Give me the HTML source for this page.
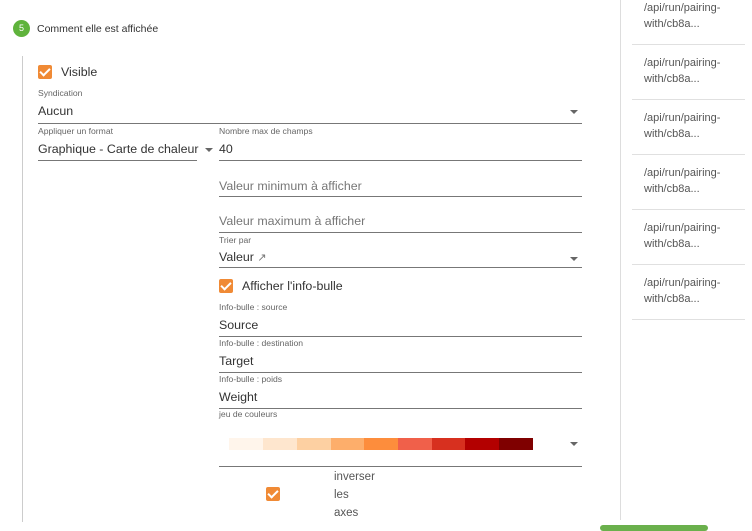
<!DOCTYPE html>
<html><head><meta charset="utf-8"><style>
*{margin:0;padding:0;box-sizing:border-box}
body{width:752px;height:528px;overflow:hidden;background:#fff;font-family:"Liberation Sans",sans-serif;color:#333;position:relative}
.a{position:absolute;white-space:nowrap}
.v{font-size:12.4px;line-height:16px;color:#333}
.l{font-size:8.6px;line-height:10px;color:#666}
.ph{color:#777}
.u{position:absolute;height:1px;background:#777}
.cb{position:absolute;width:14px;height:14px;background:#f08a35;border-radius:2px}
.cb:after{content:"";position:absolute;left:4px;top:1px;width:4px;height:8px;border:solid #fff;border-width:0 2px 2px 0;transform:rotate(45deg)}
.ar{position:absolute;width:0;height:0;border-left:4px solid transparent;border-right:4px solid transparent;border-top:4px solid #666}
.r{font-size:11px;line-height:16px;color:#555}
.s{position:absolute;left:632px;width:113px;height:1px;background:#e0e0e0}
</style></head><body>
<div class="a" style="left:13px;top:20px;width:17px;height:17px;border-radius:50%;background:#5fb33c;color:#fff;font-size:9px;line-height:17px;text-align:center">5</div>
<div class="a" style="left:37px;top:22px;font-size:10.5px;line-height:14px;color:#333">Comment elle est affichée</div>
<div class="a" style="left:22px;top:56px;width:1px;height:466px;background:#ccc"></div>
<div class="cb" style="left:38px;top:65px"></div>
<div class="a v" style="left:61px;top:64px">Visible</div>
<div class="a l" style="left:38px;top:88px">Syndication</div>
<div class="a v" style="left:38px;top:103px">Aucun</div>
<div class="ar" style="left:570px;top:110px"></div>
<div class="u" style="left:38px;top:123px;width:544px"></div>
<div class="a l" style="left:38px;top:126px">Appliquer un format</div>
<div class="a v" style="left:38px;top:141px">Graphique - Carte de chaleur</div>
<div class="ar" style="left:205px;top:148px"></div>
<div class="u" style="left:38px;top:160px;width:159px"></div>
<div class="a l" style="left:219px;top:126px">Nombre max de champs</div>
<div class="a v" style="left:219px;top:141px">40</div>
<div class="u" style="left:219px;top:160px;width:363px"></div>
<div class="a v ph" style="left:219px;top:178px">Valeur minimum à afficher</div>
<div class="u" style="left:219px;top:196px;width:363px"></div>
<div class="a v ph" style="left:219px;top:213px">Valeur maximum à afficher</div>
<div class="u" style="left:219px;top:232px;width:363px"></div>
<div class="a l" style="left:219px;top:235px">Trier par</div>
<div class="a v" style="left:219px;top:249px">Valeur <span style="color:#777;font-size:11px">↗</span></div>
<div class="ar" style="left:570px;top:257px"></div>
<div class="u" style="left:219px;top:267px;width:363px"></div>
<div class="cb" style="left:219px;top:279px"></div>
<div class="a v" style="left:242px;top:278px">Afficher l'info-bulle</div>
<div class="a l" style="left:219px;top:302px">Info-bulle : source</div>
<div class="a v" style="left:219px;top:317px">Source</div>
<div class="u" style="left:219px;top:336px;width:363px"></div>
<div class="a l" style="left:219px;top:338px">Info-bulle : destination</div>
<div class="a v" style="left:219px;top:353px">Target</div>
<div class="u" style="left:219px;top:372px;width:363px"></div>
<div class="a l" style="left:219px;top:374px">Info-bulle : poids</div>
<div class="a v" style="left:219px;top:389px">Weight</div>
<div class="u" style="left:219px;top:408px;width:363px"></div>
<div class="a l" style="left:219px;top:409px">jeu de couleurs</div>
<div class="a" style="left:229px;top:438px;height:12px;display:flex">
<div style="width:34px;background:#fff5eb"></div><div style="width:34px;background:#fee6ce"></div><div style="width:34px;background:#fdd0a2"></div><div style="width:33px;background:#fdae6b"></div><div style="width:34px;background:#fd8d3c"></div><div style="width:34px;background:#f0604a"></div><div style="width:33px;background:#d7301f"></div><div style="width:34px;background:#b30000"></div><div style="width:34px;background:#7f0000"></div></div>
<div class="ar" style="left:570px;top:442px"></div>
<div class="u" style="left:219px;top:466px;width:363px"></div>
<div class="cb" style="left:266px;top:487px"></div>
<div class="a" style="left:334px;top:468px;font-size:11.5px;line-height:18px;color:#555;white-space:normal">inverser<br>les<br>axes</div>
<div class="a" style="left:620px;top:0;width:1px;height:520px;background:#ddd"></div>
<div class="a r" style="left:644px;top:0">/api/run/pairing-<br>with/cb8a...</div>
<div class="s" style="top:44px"></div>
<div class="a r" style="left:644px;top:55px">/api/run/pairing-<br>with/cb8a...</div>
<div class="s" style="top:99px"></div>
<div class="a r" style="left:644px;top:110px">/api/run/pairing-<br>with/cb8a...</div>
<div class="s" style="top:154px"></div>
<div class="a r" style="left:644px;top:165px">/api/run/pairing-<br>with/cb8a...</div>
<div class="s" style="top:209px"></div>
<div class="a r" style="left:644px;top:220px">/api/run/pairing-<br>with/cb8a...</div>
<div class="s" style="top:264px"></div>
<div class="a r" style="left:644px;top:275px">/api/run/pairing-<br>with/cb8a...</div>
<div class="s" style="top:319px"></div>
<div class="a" style="left:600px;top:525px;width:108px;height:6px;background:#6ab04c;border-radius:3px"></div>
</body></html>
